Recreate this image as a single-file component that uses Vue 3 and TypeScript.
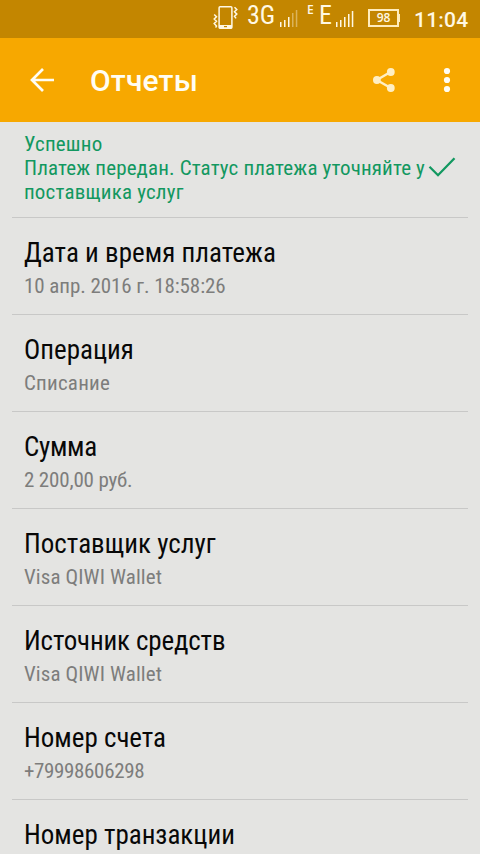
<script setup lang="ts">
interface Line {
  text: string
  tracking: number
}

interface Field {
  title: Line
  value: Line
}

const line = (text: string, tracking = 0): Line => ({ text, tracking })

const message: Line[] = [
  line('Успешно', 0.2),
  line('Платеж передан. Статус платежа уточняйте у', 0.14),
  line('поставщика услуг', 0.18),
]

const fields: Field[] = [
  { title: line('Дата и время платежа', 0.03), value: line('10 апр. 2016 г. 18:58:26', -0.08) },
  { title: line('Операция'), value: line('Списание', 0.22) },
  { title: line('Сумма', -0.3), value: line('2 200,00 руб.', -0.17) },
  { title: line('Поставщик услуг', 0.02), value: line('Visa QIWI Wallet', 0.1) },
  { title: line('Источник средств', -0.15), value: line('Visa QIWI Wallet', 0.1) },
  { title: line('Номер счета'), value: line('+79998606298', -0.36) },
  { title: line('Номер транзакции'), value: line('') },
]

const spacing = (item: Line) => ({ letterSpacing: `${item.tracking}px` })
</script>

<template>
  <div class="screen">
    <header class="status-bar">
      <svg class="vibrate" width="28" height="28" viewBox="0 0 28 28" fill="none" stroke="#fff8e4">
        <rect x="7.1" y="3.8" width="12.8" height="21.4" rx="1" stroke-width="1.5" />
        <path d="M7 22h13v3.4H7z" fill="#fff8e4" stroke="none" />
        <path d="M12 23.6h3" stroke="#c38600" stroke-width="1.2" />
        <path d="M2.2 11.5l2.3 2.2-2.3 2.3 2.3 2.3-2.3 2.3 2.3 2.4-1 1.5M22.5 4.3l2.3 2.2-2.3 2.3 2.3 2.3-2.3 2.3 1.6 2" stroke-width="1.5" />
      </svg>
      <span class="net">3G</span>
      <svg class="signal" width="18" height="20" viewBox="0 0 18 20" fill="#fff8e4">
        <path d="M0 14h1.5v5H0zM4 12h1.5v7H4zM8 9h1.5v10H8z" />
        <path d="M12 5h1.5v14H12zM15.8 2h1.5v17h-1.5z" opacity=".4" />
      </svg>
      <span class="edge-small">E</span>
      <span class="edge">E</span>
      <svg class="signal" width="18" height="20" viewBox="0 0 18 20" fill="#fff8e4">
        <path d="M0 14h1.5v5H0zM4 12h1.5v7H4zM8 9h1.5v10H8zM12 6h1.5v13H12zM15.8 3h1.5v16h-1.5z" />
      </svg>
      <span class="battery">98</span>
      <span class="battery-tip"></span>
      <span class="clock">11:04</span>
    </header>

    <nav class="toolbar">
      <svg class="back" width="26" height="26" viewBox="0 0 26 26" fill="none" stroke="#fffdf3" stroke-width="2.7">
        <path d="M25 13H3M14 2L3 13l11 11" />
      </svg>
      <h1 class="heading">Отчеты</h1>
      <svg class="share" width="24" height="26" viewBox="0 0 24 26" fill="#ffefc4">
        <path d="M18.5 5L4.8 13l14 8" fill="none" stroke="#ffefc4" stroke-width="2.4" />
        <circle cx="4.9" cy="13" r="3.9" /><circle cx="18.8" cy="5" r="3.9" /><circle cx="18.8" cy="21" r="3.9" />
      </svg>
      <svg class="more" width="8" height="26" viewBox="0 0 8 26" fill="#fffdf3">
        <circle cx="4" cy="4" r="3.1" /><circle cx="4" cy="13" r="3.1" /><circle cx="4" cy="22" r="3.1" />
      </svg>
    </nav>

    <main class="list">
      <section class="result">
        <p class="message">
          <span v-for="item in message" :key="item.text" :style="spacing(item)">{{ item.text }}</span>
        </p>
        <svg class="check" width="28" height="22" viewBox="0 0 28 22" fill="none" stroke="#129860" stroke-width="2.3">
          <path d="M1.5 10.7L10 19.2 26.5 2.2" />
        </svg>
      </section>
      <section v-for="field in fields" :key="field.title.text" class="field">
        <h2 class="title" :style="spacing(field.title)">{{ field.title.text }}</h2>
        <p class="value" :style="spacing(field.value)">{{ field.value.text }}</p>
      </section>
    </main>
  </div>
</template>

<style>
body {
  margin: 0;
  overflow: hidden;
}
</style>

<style scoped>
.screen {
  width: 480px;
  height: 854px;
  overflow: hidden;
  background: #e4e4e2;
  font-family: 'Roboto Condensed', Roboto, sans-serif;
  font-stretch: 75%;
}
.status-bar {
  display: flex;
  height: 38px;
  background: #c38600;
  color: #fff8e4;
  font-family: 'Open Sans', sans-serif;
  font-stretch: 100%;
}
.status-bar > * {
  flex: none;
}
.vibrate {
  margin: 3px 7px 0 212px;
}
.net {
  width: 33px;
  font-family: Roboto, sans-serif;
  font-size: 26px;
  font-stretch: 87.5%;
  font-weight: 400;
  line-height: 31px;
}
.signal {
  margin-top: 8px;
}
.edge-small {
  width: 13px;
  margin-left: 9px;
  font-size: 12px;
  font-weight: 600;
  line-height: 19px;
}
.edge {
  width: 16px;
  font-family: Roboto, sans-serif;
  font-size: 26px;
  font-stretch: 75%;
  font-weight: 450;
  line-height: 31px;
  text-indent: -1px;
}
.battery {
  box-sizing: border-box;
  width: 31px;
  height: 18px;
  margin: 9px 0 0 14px;
  border: 2px solid #ffecbd;
  font: 600 12px/14px 'Open Sans', sans-serif;
  text-align: center;
}
.battery-tip {
  width: 1px;
  height: 8px;
  margin-top: 14px;
  background: #ffecbd;
}
.clock {
  margin-left: 14px;
  font: 500 21px/40px Roboto, sans-serif;
  letter-spacing: 0.2px;
}
.toolbar {
  display: flex;
  align-items: center;
  height: 84px;
  background: #f7a800;
}
.toolbar > * {
  flex: none;
}
.back {
  margin-left: 29px;
}
.heading {
  width: 281px;
  margin: 0 0 0 35px;
  color: #fffdf3;
  font: 500 30px/37px Roboto, sans-serif;
  letter-spacing: 0.15px;
}
.share {
  margin-left: 1px;
}
.more {
  margin-left: 47px;
}
.list {
  padding: 0 12px;
}
.result {
  display: flex;
  box-sizing: border-box;
  height: 96px;
  padding: 10px 12px 0;
  border-bottom: 1px solid #c8c8c7;
  color: #129860;
}
.message {
  width: 404px;
  margin: 0;
  font-size: 21px;
  font-weight: 450;
  line-height: 24px;
  white-space: nowrap;
}
.message span {
  display: block;
}
.check {
  flex: none;
  margin-top: 24px;
}
.field {
  box-sizing: border-box;
  height: 97px;
  padding: 18px 12px 0;
  border-bottom: 1px solid #c8c8c7;
}
.title {
  margin: 0;
  color: #080808;
  font-size: 27px;
  font-weight: 430;
  line-height: 34px;
  white-space: nowrap;
}
.value {
  margin: 4px 0 0;
  color: #7d7d7c;
  font-size: 21px;
  font-weight: 430;
  line-height: 24px;
  white-space: nowrap;
}
</style>
